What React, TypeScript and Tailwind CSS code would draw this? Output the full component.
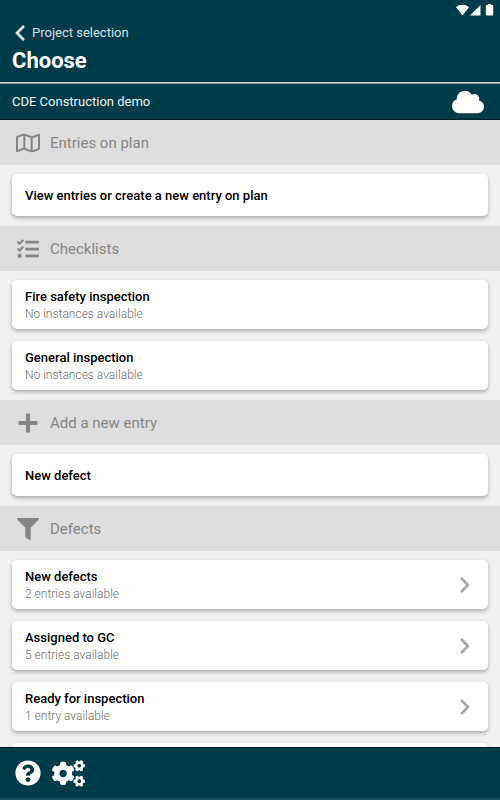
import {
  FaChevronLeft,
  FaChevronRight,
  FaCloud,
  FaCogs,
  FaFilter,
  FaPlus,
  FaQuestionCircle,
  FaRegMap,
  FaTasks,
} from "react-icons/fa";
import type { IconType } from "react-icons";

type Entry = {
  title: string;
  info?: string;
  hasArrow?: boolean;
};

type Section = {
  title: string;
  icon: IconType;
  iconClass: string;
  entries: Entry[];
};

const sections: Section[] = [
  {
    title: "Entries on plan",
    icon: FaRegMap,
    iconClass: "h-[22px] w-6",
    entries: [{ title: "View entries or create a new entry on plan" }],
  },
  {
    title: "Checklists",
    icon: FaTasks,
    iconClass: "size-[22px]",
    entries: [
      { title: "Fire safety inspection", info: "No instances available" },
      { title: "General inspection", info: "No instances available" },
    ],
  },
  {
    title: "Add a new entry",
    icon: FaPlus,
    iconClass: "size-[22px]",
    entries: [{ title: "New defect" }],
  },
  {
    title: "Defects",
    icon: FaFilter,
    iconClass: "size-[22px]",
    entries: [
      { title: "New defects", info: "2 entries available", hasArrow: true },
      { title: "Assigned to GC", info: "5 entries available", hasArrow: true },
      { title: "Ready for inspection", info: "1 entry available", hasArrow: true },
    ],
  },
];

const cardClass =
  "w-full shrink-0 rounded-[5px] bg-white shadow-[0_2px_4px_rgba(0,0,0,0.3)]";

const StatusIcons = () => (
  <div className="flex h-5 items-center justify-end pr-[6px]">
    <svg viewBox="0 0 38 12" className="h-3 w-[38px]" fill="currentColor" aria-hidden="true">
      <path d="M0 3.2C3.6-.1 9.4-.1 13 3.2L6.5 11.5Z" />
      <path d="M24.5 1v10.5H14Z" />
      <path d="M32 0h3v1h1.300q.9 0 .9.9v8.700q0 .9-.9.9h-5.600q-.9 0-.9-.9V1.900q0-.9.9-.9H32Z" />
    </svg>
  </div>
);

const EntryCard = ({ entry }: { entry: Entry }) => (
  <button
    type="button"
    className={`${cardClass} flex items-center justify-between pr-[17px] pl-[13px] text-left ${
      entry.info ? "h-[49px]" : "h-[42px]"
    }`}
  >
    <span className="flex flex-col">
      <span className="pt-px text-[13px] leading-[18px] font-medium text-black">
        {entry.title}
      </span>
      {entry.info && (
        <span className="text-[12px] leading-[16px] font-light text-[#707070]">{entry.info}</span>
      )}
    </span>
    {entry.hasArrow && <FaChevronRight className="h-[18px] w-3 text-[#aaaaaa]" />}
  </button>
);

const SectionBlock = ({ section }: { section: Section }) => {
  const Icon = section.icon;

  return (
    <section>
      <div className="flex h-[45px] items-center gap-[10px] bg-[#dedede] pl-[15px] text-[#858585]">
        <span className="flex w-[25px] justify-center">
          <Icon className={section.iconClass} />
        </span>
        <h2 className="text-[15px] leading-5">{section.title}</h2>
      </div>
      <div className="flex flex-col gap-3 px-3 pt-[9px] pb-[10px]">
        {section.entries.map((entry) => (
          <EntryCard key={entry.title} entry={entry} />
        ))}
      </div>
    </section>
  );
};

export default function App() {
  return (
    <div className="flex h-screen flex-col bg-[#f1f1f1] font-[Roboto,sans-serif]">
      <header className="shrink-0 bg-[#003b4a] text-white">
        <StatusIcons />
        <div className="flex h-[63px] flex-col border-b border-[#d0d0d0] px-3 pt-1">
          <a href="#projects" className="flex items-center gap-1 text-[#dce0e2]">
            <FaChevronLeft className="h-[18px] w-4" />
            <span className="text-[13px] leading-[18px]">Project selection</span>
          </a>
          <h1 className="mt-1 text-[22px] leading-[30px] font-bold">Choose</h1>
        </div>
        <div className="flex h-[37px] items-center justify-between border-t border-b border-t-[#8a9ba3] border-b-[#001c26] pr-4 pl-3">
          <p className="text-[13px] leading-[18px] text-[#f0f3f4]">CDE Construction demo</p>
          <button type="button" aria-label="Sync">
            <FaCloud className="h-[26px] w-8" />
          </button>
        </div>
      </header>

      <main className="min-h-0 flex-1 overflow-y-auto [scrollbar-width:none]">
        {sections.map((section) => (
          <SectionBlock key={section.title} section={section} />
        ))}
        <div className="px-3 pt-[2px] pb-3">
          <div className={`${cardClass} h-[49px]`} />
        </div>
      </main>

      <footer className="flex h-[53px] shrink-0 items-center gap-[11px] border-t border-b-2 border-t-[#001c26] border-b-[#1d5365] bg-[#003b4a] px-[15px] text-white">
        <button type="button" aria-label="Help">
          <FaQuestionCircle className="size-[26px]" />
        </button>
        <button type="button" aria-label="Settings">
          <FaCogs className="h-[27px] w-[33px]" />
        </button>
      </footer>
    </div>
  );
}
